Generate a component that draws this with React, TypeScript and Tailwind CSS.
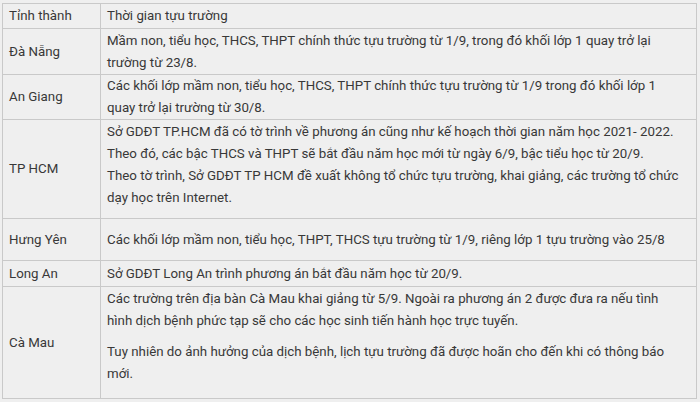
// each inner array is one paragraph, each string one visual line as in the source table
const rows: { name: string; h: string; paras: string[][]; pad?: string }[] = [
  {
    name: "Đà Nẵng",
    h: "h-[46px]",
    paras: [["Mầm non, tiểu học, THCS, THPT chính thức tựu trường từ 1/9, trong đó khối lớp 1 quay trở lại", "trường từ 23/8."]],
  },
  {
    name: "An Giang",
    h: "h-[44px]",
    paras: [["Các khối lớp mầm non, tiểu học, THCS, THPT chính thức tựu trường từ 1/9 trong đó khối lớp 1", "quay trở lại trường từ 30/8."]],
  },
  {
    name: "TP HCM",
    h: "h-[99px]",
    pad: "pb-[9px]",
    paras: [
      [
        "Sở GDĐT TP.HCM đã có tờ trình về phương án cũng như kế hoạch thời gian năm học 2021- 2022.",
        "Theo đó, các bậc THCS và THPT sẽ bắt đầu năm học mới từ ngày 6/9, bậc tiểu học từ 20/9.",
        "Theo tờ trình, Sở GDĐT TP HCM đề xuất không tổ chức tựu trường, khai giảng, các trường tổ chức",
        "dạy học trên Internet.",
      ],
    ],
  },
  {
    name: "Hưng Yên",
    h: "h-[42px]",
    paras: [["Các khối lớp mầm non, tiểu học, THPT, THCS tựu trường từ 1/9, riêng lớp 1 tựu trường vào 25/8"]],
  },
  {
    name: "Long An",
    h: "h-[26px]",
    paras: [["Sở GDĐT Long An trình phương án bắt đầu năm học từ 20/9."]],
  },
  {
    name: "Cà Mau",
    h: "h-[112px]",
    pad: "pb-[12px]",
    paras: [
      [
        "Các trường trên địa bàn Cà Mau khai giảng từ 5/9. Ngoài ra phương án 2 được đưa ra nếu tình",
        "hình dịch bệnh phức tạp sẽ cho các học sinh tiến hành học trực tuyến.",
      ],
      ["Tuy nhiên do ảnh hưởng của dịch bệnh, lịch tựu trường đã được hoãn cho đến khi có thông báo", "mới."],
    ],
  },
];

export default function App() {
  return (
    <div className="w-[700px] h-[402px] overflow-hidden bg-[#efefef] pt-[3px] pl-[2px] font-['Roboto',sans-serif] text-[13.3px] leading-[22px] text-[#383838]">
      <table className="w-[695px] border-collapse table-fixed">
        <colgroup>
          <col className="w-[98px]" />
          <col />
        </colgroup>
        <tbody>
          <tr className="h-[25px]">
            <td className="border border-[#c9c9c9] px-[6px] py-0 align-middle">Tỉnh thành</td>
            <td className="border border-[#c9c9c9] px-[6px] py-0 align-middle">Thời gian tựu trường</td>
          </tr>
          {rows.map((r) => (
            <tr key={r.name} className={r.h}>
              <td className="border border-[#c9c9c9] px-[6px] py-0 align-middle">{r.name}</td>
              <td className={`border border-[#c9c9c9] px-[6px] py-0 align-middle ${r.pad ?? ""}`}>
                {r.paras.map((p, i) => (
                  <p key={i} className={i < r.paras.length - 1 ? "mb-[9px]" : ""}>
                    {p.map((line, j) => (
                      <span key={j} className="block whitespace-nowrap">
                        {line}
                      </span>
                    ))}
                  </p>
                ))}
              </td>
            </tr>
          ))}
        </tbody>
      </table>
    </div>
  );
}
